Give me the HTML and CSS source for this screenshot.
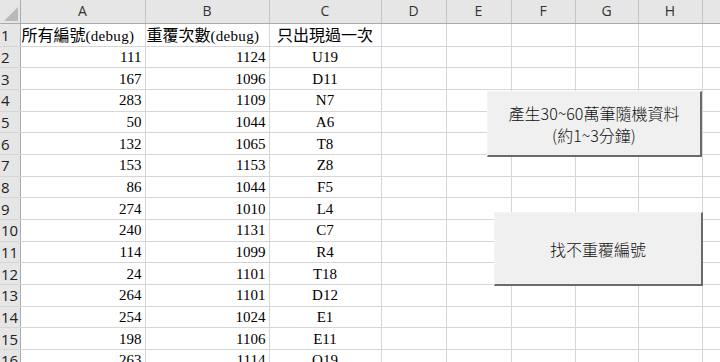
FILE: index.html
```html
<!DOCTYPE html>
<html lang="zh-Hant">

<head>
  <meta charset="UTF-8">
  <meta name="viewport" content="width=device-width, initial-scale=1.0">
  <title>找不重覆編號</title>
  <link rel="stylesheet" href="styles.css">
</head>

<body>
  <div class="sheet-wrap">
    <table class="sheet">
      <colgroup>
        <col class="c-row">
        <col class="c-a">
        <col class="c-b">
        <col class="c-c">
        <col class="c-std">
        <col class="c-std">
        <col class="c-f">
        <col class="c-g">
        <col class="c-h">
        <col class="c-rest">
      </colgroup>
      <thead>
        <tr class="col-heads">
          <th class="corner"><span class="tri"></span></th>
          <th>A</th><th>B</th><th>C</th><th>D</th><th>E</th><th>F</th><th>G</th><th>H</th><th></th>
        </tr>
      </thead>
      <tbody>
        <tr>
          <th>1</th>
          <td class="title"><span class="zh">所有編號</span>(debug)</td>
          <td class="title"><span class="zh">重覆次數</span>(debug)</td>
          <td class="mid"><span class="zh">只出現過一次</span></td>
          <td></td><td></td><td></td><td></td><td></td><td></td>
        </tr>
        <tr><th>2</th><td class="num">111</td><td class="num">1124</td><td class="mid">U19</td><td></td><td></td><td></td><td></td><td></td><td></td></tr>
        <tr><th>3</th><td class="num">167</td><td class="num">1096</td><td class="mid">D11</td><td></td><td></td><td></td><td></td><td></td><td></td></tr>
        <tr><th>4</th><td class="num">283</td><td class="num">1109</td><td class="mid">N7</td><td></td><td></td><td></td><td></td><td></td><td></td></tr>
        <tr><th>5</th><td class="num">50</td><td class="num">1044</td><td class="mid">A6</td><td></td><td></td><td></td><td></td><td></td><td></td></tr>
        <tr><th>6</th><td class="num">132</td><td class="num">1065</td><td class="mid">T8</td><td></td><td></td><td></td><td></td><td></td><td></td></tr>
        <tr><th>7</th><td class="num">153</td><td class="num">1153</td><td class="mid">Z8</td><td></td><td></td><td></td><td></td><td></td><td></td></tr>
        <tr><th>8</th><td class="num">86</td><td class="num">1044</td><td class="mid">F5</td><td></td><td></td><td></td><td></td><td></td><td></td></tr>
        <tr><th>9</th><td class="num">274</td><td class="num">1010</td><td class="mid">L4</td><td></td><td></td><td></td><td></td><td></td><td></td></tr>
        <tr><th>10</th><td class="num">240</td><td class="num">1131</td><td class="mid">C7</td><td></td><td></td><td></td><td></td><td></td><td></td></tr>
        <tr><th>11</th><td class="num">114</td><td class="num">1099</td><td class="mid">R4</td><td></td><td></td><td></td><td></td><td></td><td></td></tr>
        <tr><th>12</th><td class="num">24</td><td class="num">1101</td><td class="mid">T18</td><td></td><td></td><td></td><td></td><td></td><td></td></tr>
        <tr><th>13</th><td class="num">264</td><td class="num">1101</td><td class="mid">D12</td><td></td><td></td><td></td><td></td><td></td><td></td></tr>
        <tr><th>14</th><td class="num">254</td><td class="num">1024</td><td class="mid">E1</td><td></td><td></td><td></td><td></td><td></td><td></td></tr>
        <tr><th>15</th><td class="num">198</td><td class="num">1106</td><td class="mid">E11</td><td></td><td></td><td></td><td></td><td></td><td></td></tr>
        <tr><th>16</th><td class="num">263</td><td class="num">1114</td><td class="mid">O19</td><td></td><td></td><td></td><td></td><td></td><td></td></tr>
      </tbody>
    </table>

    <!-- form buttons floating over the sheet -->
    <button class="xl-btn btn-gen">產生30~60萬筆隨機資料<br>(約1~3分鐘)</button>
    <button class="xl-btn btn-find">找不重覆編號</button>
  </div>
</body>

</html>
```

FILE: styles.css
```css
body {
  margin: 0;
  background: #fff;
  overflow: hidden;
}

.sheet-wrap {
  position: relative;
  width: 720px;
  height: 362px;
  overflow: hidden;
}

.sheet {
  border-collapse: collapse;
  table-layout: fixed;
  width: 720px;
  font-family: "Liberation Serif", "Noto Sans CJK TC", serif;
  font-size: 15px;
  color: #000;
}

.c-row { width: 20px; }
.c-a { width: 125px; }
.c-b { width: 124px; }
.c-c { width: 112px; }
.c-std { width: 65px; }
.c-f { width: 64px; }
.c-g { width: 63px; }
.c-h { width: 64px; }
.c-rest { width: 18px; }

.sheet td,
.sheet th {
  border: 1px solid #d6d6d6;
  padding: 0 3px;
  height: 21.7px;
  line-height: 20px;
  white-space: nowrap;
  box-sizing: border-box;
}

.sheet td.title {
  padding: 0 1px;
  letter-spacing: 0.3px;
}

.sheet th {
  background: #e6e6e6;
  font-family: "Open Sans", "Liberation Sans", sans-serif;
  font-weight: normal;
  font-size: 15px;
  color: #222;
}

.sheet tbody th {
  text-align: left;
  padding: 0 1px;
  border-right: 1px solid #ababab;
  border-left: none;
  overflow: hidden;
}

.col-heads th {
  height: 23px;
  text-align: center;
  font-size: 14px;
  color: #333;
  border-top: none;
  border-color: #c4c4c4;
  border-bottom: 1px solid #ababab;
}

.col-heads th.corner {
  position: relative;
  border-left: none;
  border-right: 1px solid #ababab;
  padding: 0;
}

.tri {
  position: absolute;
  right: 2px;
  bottom: 2px;
  width: 0;
  height: 0;
  border-left: 14px solid transparent;
  border-bottom: 14px solid #b9b9b9;
}

.num {
  text-align: right;
}

.mid {
  text-align: center;
}

.zh {
  font-family: "Noto Sans CJK TC", sans-serif;
  font-size: 16px;
  letter-spacing: 0;
}

.xl-btn {
  position: absolute;
  margin: 0;
  padding: 0;
  background: #f0f0f0;
  border-top: 1px solid #f4f4f4;
  border-left: 1px solid #f4f4f4;
  border-right: 2px solid #6a6a6a;
  border-bottom: 2px solid #6a6a6a;
  font-family: "Noto Sans CJK TC", sans-serif;
  font-size: 16px;
  font-weight: 300;
  line-height: 22px;
  color: #111;
  text-align: center;
}

.btn-gen {
  left: 487px;
  top: 91px;
  width: 215px;
  height: 66px;
}

.btn-find {
  left: 494px;
  top: 212px;
  width: 209px;
  height: 74px;
}
```
